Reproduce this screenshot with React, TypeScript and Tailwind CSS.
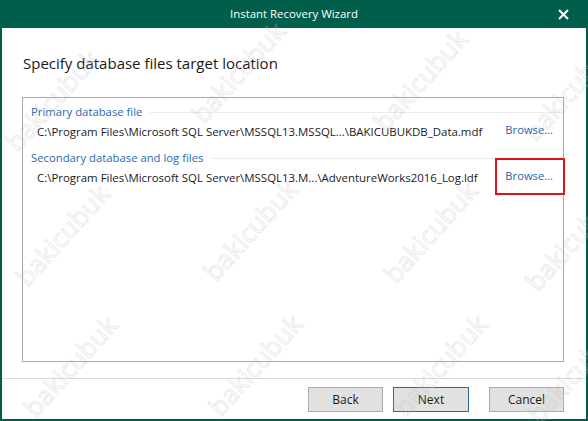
const font = { fontFamily: '"Open Sans", "Noto Sans", sans-serif' };

const marks = [
  [52, 100], [238, 72], [420, 80], [570, 90],
  [62, 235], [250, 230], [430, 232], [572, 240],
  [70, 366], [255, 365], [440, 365], [574, 372],
];

function Watermarks() {
  return (
    <div className="pointer-events-none absolute inset-0 overflow-hidden">
      {marks.map(([x, y], i) => (
        <span
          key={i}
          className="absolute text-[26px] leading-none text-transparent whitespace-nowrap"
          style={{
            left: x,
            top: y,
            transform: "translate(-50%, -50%) rotate(-48deg)",
            WebkitTextStroke: "1px rgba(190,190,190,0.32)",
            fontFamily: '"Open Sans", sans-serif',
          }}
        >
          bakicubuk
        </span>
      ))}
    </div>
  );
}

function GroupHeader({ title }: { title: string }) {
  return (
    <div className="flex items-center gap-2 h-[16px] pl-[8px] pr-[3px]">
      <span className="text-[11.3px] text-[#2a6ab0] whitespace-nowrap">{title}</span>
      <div className="flex-1 h-px bg-[#ececec]" />
    </div>
  );
}

function FileRow({ path, marked }: { path: string; marked?: boolean }) {
  return (
    <div className="flex items-center justify-between h-[24px] pl-[14px] pr-[10px]">
      <span className="text-[11.45px] text-[#1a1a1a] whitespace-nowrap">{path}</span>
      <span className="relative -mt-[4px] text-[11.2px] text-[#1e64ad]">
        Browse...
        {marked && (
          <span className="absolute -left-[10px] -right-[12px] -top-[10px] -bottom-[11px] border-2 border-[#d9141b]" />
        )}
      </span>
    </div>
  );
}

export default function App() {
  return (
    <div className="relative w-[588px] h-[421px] bg-[#005f4b] flex flex-col overflow-hidden" style={font}>
      <div className="relative h-[28px] flex items-center justify-center text-white text-[11.4px]">
        Instant Recovery Wizard
        <svg className="absolute right-[19px] top-[9px]" width="11" height="11" viewBox="0 0 11 11">
          <path d="M1 1 L10 10 M10 1 L1 10" stroke="white" strokeWidth="2" />
        </svg>
      </div>
      <div className="flex-1 bg-white mx-[2px] mb-[2px] flex flex-col">
        <h1 className="pl-[21px] pt-[25px] text-[15px] leading-[20px] text-[#1a1a1a]">
          Specify database files target location
        </h1>
        <div className="mt-[24px] ml-[20px] w-[542px] h-[265px] border border-[#a8a8a8] pt-[6px]">
          <GroupHeader title="Primary database file" />
          <FileRow path="C:\Program Files\Microsoft SQL Server\MSSQL13.MSSQL...\BAKICUBUKDB_Data.mdf" />
          <div className="mt-[6px]">
            <GroupHeader title="Secondary database and log files" />
          </div>
          <FileRow path="C:\Program Files\Microsoft SQL Server\MSSQL13.M...\AdventureWorks2016_Log.ldf" marked />
        </div>
        <div className="mt-[16px] h-px bg-[#dadada]" />
        <div className="flex justify-end gap-[10px] pr-[22px] pt-[8px]">
          <button className="w-[75px] h-[25px] bg-[#e1e1e1] border border-[#adadad] text-[12px] text-[#1a1a1a]">Back</button>
          <button className="w-[76px] h-[25px] bg-[#e1e1e1] border border-[#2f6a9c] text-[12px] text-[#1a1a1a] mr-[10px]">Next</button>
          <button className="w-[75px] h-[25px] bg-[#e1e1e1] border border-[#adadad] text-[12px] text-[#1a1a1a]">Cancel</button>
        </div>
      </div>
      <Watermarks />
    </div>
  );
}
